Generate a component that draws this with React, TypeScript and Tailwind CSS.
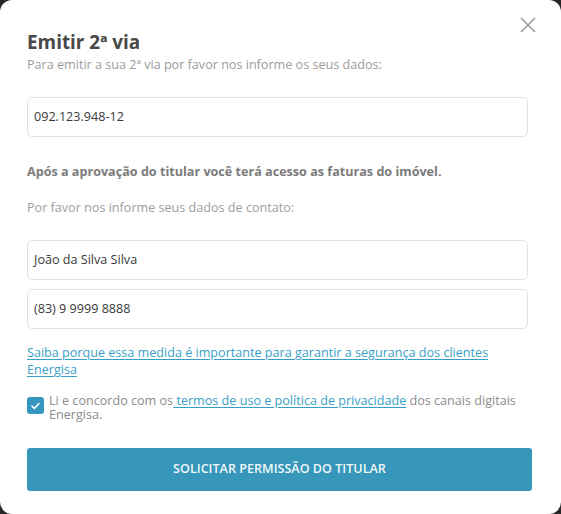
import { useState } from "react";

function CloseIcon() {
  return (
    <svg width="16" height="16" viewBox="0 0 16 16" className="text-[#8a8a8a]">
      <path d="M1 1 L15 15 M15 1 L1 15" stroke="currentColor" strokeWidth="1.2" fill="none" />
    </svg>
  );
}

function Field({ value }: { value: string }) {
  return (
    <div className="h-10 w-[501px] rounded-[5px] border border-[#e3e3e3] flex items-center px-[6px] text-[12.6px] text-[#3a3a3a]">
      {value}
    </div>
  );
}

export default function App() {
  const [checked, setChecked] = useState(true);

  return (
    <div className="h-[514px] w-[561px] bg-[#262626]" style={{ fontFamily: '"Open Sans", "Noto Sans", sans-serif' }}>
      <div className="relative h-full w-full rounded-xl bg-white pl-[27px] pt-[29px]">
        <button className="absolute right-[25px] top-[17px]">
          <CloseIcon />
        </button>

        <h2 className="text-[18.9px] leading-[26px] font-bold text-[#484848]">Emitir 2ª via</h2>
        <p className="mt-px text-[12.6px] leading-[18px] text-[#9b9b9b]">
          Para emitir a sua 2ª via por favor nos informe os seus dados:
        </p>

        <div className="mt-[23px]">
          <Field value="092.123.948-12" />
        </div>

        <p className="mt-[26px] text-[12.6px] leading-[18px] font-bold text-[#7b7b7b]">
          Após a aprovação do titular você terá acesso as faturas do imóvel.
        </p>
        <p className="mt-[18px] text-[12.6px] leading-[18px] text-[#9e9e9e]">
          Por favor nos informe seus dados de contato:
        </p>

        <div className="mt-[23px] flex flex-col gap-[9px]">
          <Field value="João da Silva Silva" />
          <Field value="(83) 9 9999 8888" />
        </div>

        <a href="#" className="mt-[15px] block w-[480px] text-[12.6px] leading-[17px] text-[#3a9fc6] underline underline-offset-2">
          Saiba porque essa medida é importante para garantir a segurança dos clientes Energisa
        </a>

        <label className="mt-[16px] flex items-start gap-[5px]">
          <span
            onClick={() => setChecked(!checked)}
            className="mt-[3px] flex h-[17px] w-[17px] shrink-0 items-center justify-center rounded-[3px] bg-[#3597bf]"
          >
            {checked && (
              <svg width="9" height="8" viewBox="0 0 9 8">
                <path d="M1 4.2 L3.4 6.4 L8 1.5" stroke="white" strokeWidth="1.6" fill="none" strokeLinecap="round" strokeLinejoin="round" />
              </svg>
            )}
          </span>
          <span className="w-[472px] text-[12.6px] leading-[14px] text-[#8c8c8c]">
            Li e concordo com os
            <a href="#" className="text-[#3a9fc6] underline underline-offset-2"> termos de uso e política de privacidade</a> dos canais digitais Energisa.
          </span>
        </label>

        <button className="mt-[26px] flex h-[43px] w-[505px] items-center justify-center rounded-[3px] bg-[#3797bb] text-[12.6px] font-semibold text-white/95">
          SOLICITAR PERMISSÃO DO TITULAR
        </button>
      </div>
    </div>
  );
}
